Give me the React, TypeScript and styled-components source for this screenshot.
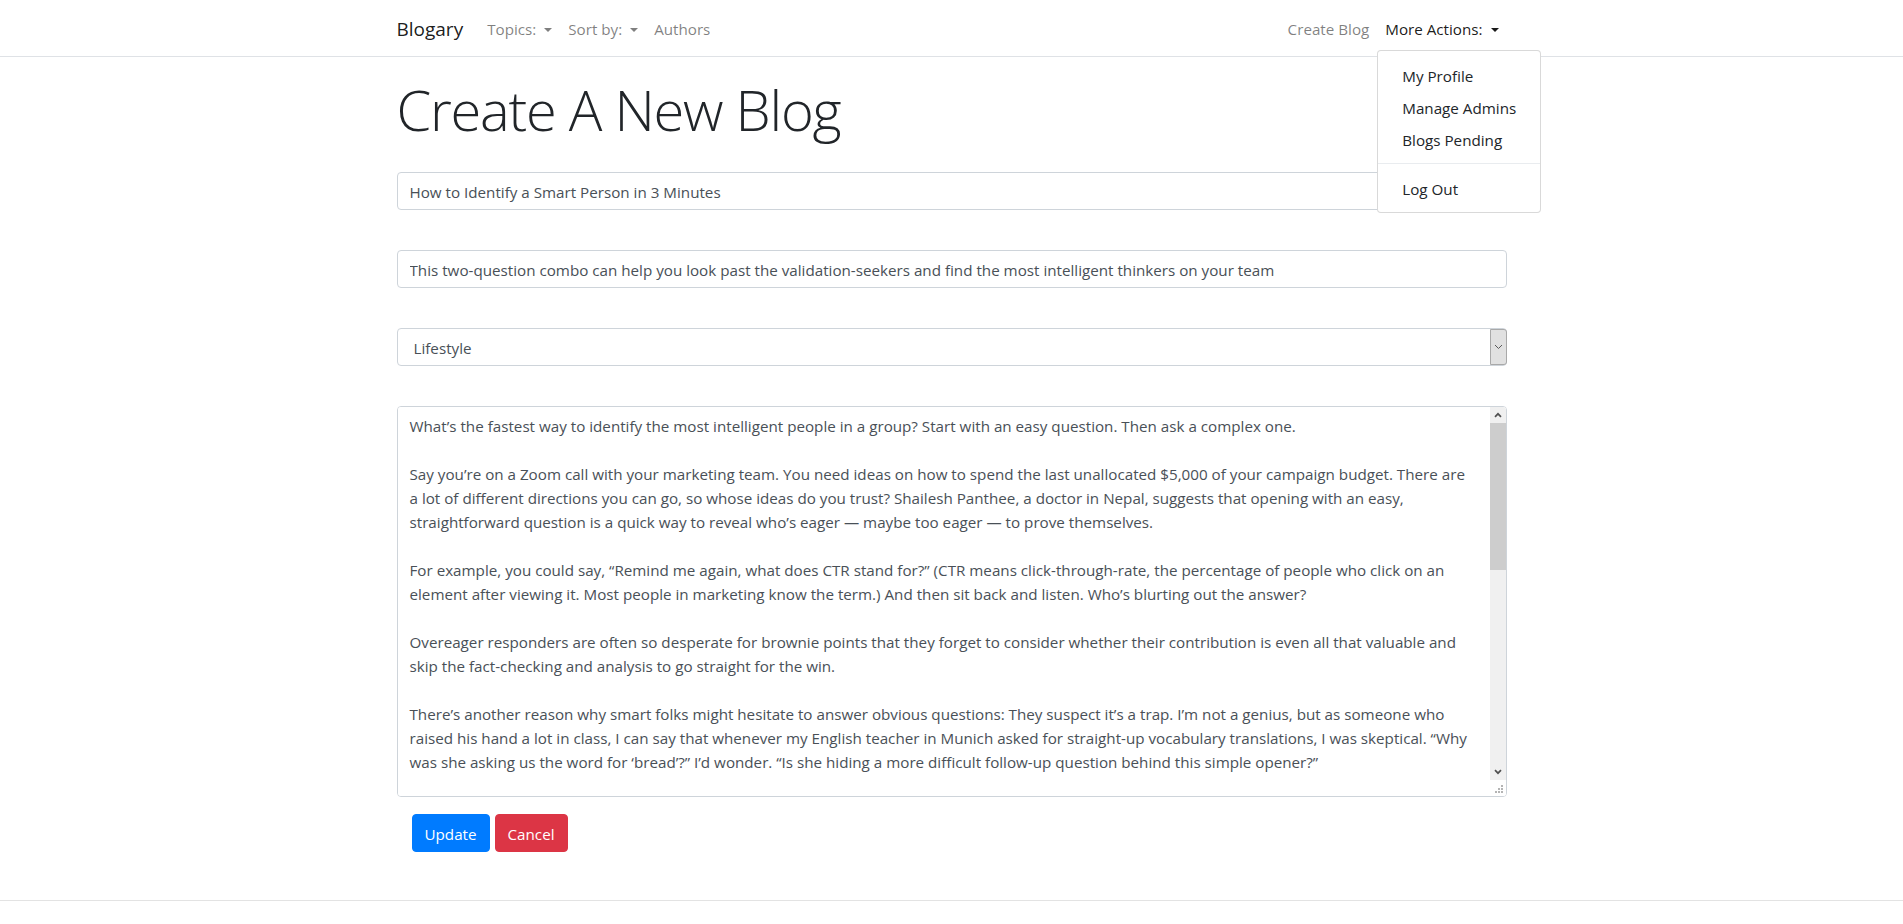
import React, { useLayoutEffect, useRef, useState } from "react";
import styled, { createGlobalStyle } from "styled-components";

const GlobalStyle = createGlobalStyle`
  html, body { margin: 0; padding: 0; background: #fff; }
  body {
    font-family: "Open Sans", "Liberation Sans", Arial, sans-serif;
    font-size: 15.2px;
    line-height: 24px;
    color: #212529;
  }
  *, *::before, *::after { box-sizing: border-box; }
`;

const Navbar = styled.nav`
  border-bottom: 1px solid #dfe2e6;
  padding: 8px 0;
`;

const NavContainer = styled.div`
  max-width: 1140px;
  margin: 0 auto;
  padding: 0 15px;
  display: flex;
  align-items: center;
  justify-content: space-between;
`;

const LeftGroup = styled.div`
  display: flex;
  align-items: center;
`;

const Brand = styled.a`
  font-size: 19px;
  line-height: 30px;
  padding: 6px 0 4px;
  margin-right: 16px;
  color: rgba(0, 0, 0, 0.9);
  text-decoration: none;
`;

const NavList = styled.ul`
  display: flex;
  list-style: none;
  margin: 0;
  padding: 0;
`;

const NavItem = styled.li`
  position: relative;
`;

const NavLink = styled.a<{ $active?: boolean }>`
  display: block;
  padding: 9px 8px 7px;
  line-height: 24px;
  font-size: 15.2px;
  white-space: pre;
  color: ${(p) => (p.$active ? "rgba(0, 0, 0, 0.9)" : "rgba(0, 0, 0, 0.5)")};
  text-decoration: none;
  cursor: pointer;
`;

const Caret = styled.span`
  display: inline-block;
  margin-left: 4px;
  vertical-align: 3px;
  border-top: 4.8px solid currentColor;
  border-left: 4.2px solid transparent;
  border-right: 4.2px solid transparent;
`;

const DropdownMenu = styled.div`
  position: absolute;
  top: calc(100% + 2px);
  left: 0;
  z-index: 1000;
  min-width: 163px;
  padding: 8px 0;
  background: #fff;
  border: 1px solid rgba(0, 0, 0, 0.15);
  border-radius: 4px;
`;

const DropdownItem = styled.a`
  display: block;
  padding: 5px 24px 3px;
  line-height: 24px;
  font-size: 15.2px;
  color: #212529;
  white-space: nowrap;
  text-decoration: none;
`;

const DropdownDivider = styled.div`
  height: 0;
  margin: 8px 0;
  border-top: 1px solid #e9ecef;
`;

const Container = styled.main`
  max-width: 1140px;
  margin: 0 auto;
  padding: 0 15px;
`;

const PageTitle = styled.h1`
  margin: 19px 0 0;
  font-size: 56px;
  font-weight: 300;
  line-height: 67px;
  letter-spacing: -1.25px;
  color: #212529;
`;

const Form = styled.form`
  margin-top: 29px;
  display: flex;
  flex-direction: column;
  gap: 40px;
`;

const fieldBase = `
  display: block;
  width: 100%;
  margin: 0;
  font-family: "Open Sans", "Liberation Sans", Arial, sans-serif;
  font-size: 15.2px;
  line-height: 24px;
  color: #495057;
  background: #fff;
  border: 1px solid #ced4da;
  border-radius: 4px;
  outline: none;
`;

const TextInput = styled.input`
  ${fieldBase}
  height: 38px;
  padding: 7px 12px 5px;
`;

const SelectWrap = styled.div`
  position: relative;
`;

const Select = styled.select`
  ${fieldBase}
  height: 38px;
  padding: 7px 16px 5px;
  appearance: none;
  -webkit-appearance: none;
`;

const SelectButton = styled.span`
  position: absolute;
  top: 1px;
  bottom: 1px;
  right: 0;
  width: 17px;
  display: flex;
  align-items: center;
  justify-content: center;
  background: #e1e1e1;
  border: 1px solid #a9a9a9;
  border-radius: 0 3px 3px 0;
  pointer-events: none;
`;

const EditorWrap = styled.div`
  position: relative;
`;

const TextArea = styled.textarea`
  ${fieldBase}
  height: 391px;
  padding: 7px 28px 5px 12px;
  white-space: pre;
  overflow-x: hidden;
  overflow-y: scroll;
  resize: none;
  scrollbar-width: none;
`;

const ScrollRail = styled.div`
  position: absolute;
  top: 1px;
  right: 1px;
  bottom: 1px;
  width: 16px;
  display: flex;
  flex-direction: column;
  pointer-events: none;
  border-radius: 0 3px 3px 0;
  overflow: hidden;
`;

const RailButton = styled.div`
  flex: 0 0 16px;
  display: flex;
  align-items: center;
  justify-content: center;
  background: #f0f0f0;
`;

const RailTrack = styled.div`
  position: relative;
  flex: 1 1 auto;
  background: #f0f0f0;
`;

const RailThumb = styled.div`
  position: absolute;
  left: 0;
  right: 0;
  background: #cdcdcd;
`;

const RailCorner = styled.div`
  flex: 0 0 16px;
  display: flex;
  align-items: flex-end;
  justify-content: flex-end;
  background: #fff;
`;

const ButtonRow = styled.div`
  margin-top: 17px;
  padding-left: 15px;
  display: flex;
  gap: 5px;
`;

const Button = styled.button<{ $variant: "primary" | "danger" }>`
  height: 38px;
  padding: 7px 12px 5px;
  font-family: "Open Sans", "Liberation Sans", Arial, sans-serif;
  font-size: 15.2px;
  line-height: 24px;
  color: #fff;
  border: 1px solid ${(p) => (p.$variant === "primary" ? "#007bff" : "#dc3545")};
  background: ${(p) => (p.$variant === "primary" ? "#007bff" : "#dc3545")};
  border-radius: 4px;
  cursor: pointer;
`;

const Footer = styled.footer`
  margin-top: 48px;
  height: 40px;
  border-top: 1px solid #e3e3e3;
`;

const bodyLines = [
  "What’s the fastest way to identify the most intelligent people in a group? Start with an easy question. Then ask a complex one.",
  "",
  "Say you’re on a Zoom call with your marketing team. You need ideas on how to spend the last unallocated $5,000 of your campaign budget. There are",
  "a lot of different directions you can go, so whose ideas do you trust? Shailesh Panthee, a doctor in Nepal, suggests that opening with an easy,",
  "straightforward question is a quick way to reveal who’s eager — maybe too eager — to prove themselves.",
  "",
  "For example, you could say, “Remind me again, what does CTR stand for?” (CTR means click-through-rate, the percentage of people who click on an",
  "element after viewing it. Most people in marketing know the term.) And then sit back and listen. Who’s blurting out the answer?",
  "",
  "Overeager responders are often so desperate for brownie points that they forget to consider whether their contribution is even all that valuable and",
  "skip the fact-checking and analysis to go straight for the win.",
  "",
  "There’s another reason why smart folks might hesitate to answer obvious questions: They suspect it’s a trap. I’m not a genius, but as someone who",
  "raised his hand a lot in class, I can say that whenever my English teacher in Munich asked for straight-up vocabulary translations, I was skeptical. “Why",
  "was she asking us the word for ‘bread’?” I’d wonder. “Is she hiding a more difficult follow-up question behind this simple opener?”",
  "",
  "Now comes the second half of the combo: ask a complex question, one that doesn’t have a clear-cut answer. Something like, “How would you",
  "reallocate our budget if our click-through-rate dropped by half next month?”",
  "",
  "Watch what happens. The people who were quickest to answer the easy question often go quiet, or they give a confident answer that falls apart",
  "under a few follow-up questions. Meanwhile, the people who held back the first time tend to speak up. They ask clarifying questions. They",
  "think out loud. They acknowledge what they don’t know.",
  "",
  "That’s a sign of real intelligence. Smart people are comfortable with complexity, and they know that the best answers rarely come instantly.",
  "They’re more interested in getting it right than in being first.",
  "",
  "Of course, this isn’t a perfect test. Some people are simply shy, and some are quick thinkers who happen to know the answer. But if you pay",
  "attention to how people respond to both questions, you’ll quickly get a sense of who’s trying to impress you and who’s trying to help you.",
  "",
  "So the next time you need to find the sharpest minds in the room, try the two-question combo. Start easy. Then go deep. And listen closely",
  "to who speaks up, and when.",
  "",
  "It only takes a few minutes, but it can tell you a lot about the people on your team — and help you build a culture where thoughtful",
  "answers are valued more than fast ones.",
  "",
  "Want more tips like this? Sign up for the free weekly newsletter and get the latest on leadership, communication, and",
  "emotional intelligence.",
];

const topics = ["Lifestyle", "Technology", "Business", "Health", "Travel", "Education"];

const RAIL_BUTTONS = 48;

function Chevron({ up }: { up?: boolean }) {
  return (
    <svg width="8" height="6" viewBox="0 0 8 6">
      <polyline
        points={up ? "1,4.8 4,1.8 7,4.8" : "1,1.2 4,4.2 7,1.2"}
        fill="none"
        stroke="#505050"
        strokeWidth="1.7"
      />
    </svg>
  );
}

function Grip() {
  const dots = [
    [11, 5],
    [8, 8],
    [11, 8],
    [5, 11],
    [8, 11],
    [11, 11],
  ];
  return (
    <svg width="16" height="16" viewBox="0 0 16 16">
      {dots.map(([x, y]) => (
        <rect key={`${x}-${y}`} x={x} y={y} width="2" height="2" fill="#b4b4b4" />
      ))}
    </svg>
  );
}

function BodyEditor() {
  const ref = useRef<HTMLTextAreaElement>(null);
  const [thumb, setThumb] = useState({ top: 0, height: 146 });

  const measure = () => {
    const el = ref.current;
    if (!el) return;
    const track = el.clientHeight - RAIL_BUTTONS;
    const ratio = Math.min(1, el.clientHeight / el.scrollHeight);
    const height = Math.max(20, track * ratio);
    const maxScroll = el.scrollHeight - el.clientHeight;
    const top = maxScroll > 0 ? ((track - height) * el.scrollTop) / maxScroll : 0;
    setThumb({ top, height });
  };

  useLayoutEffect(measure, []);

  return (
    <EditorWrap>
      <TextArea ref={ref} wrap="off" defaultValue={bodyLines.join("\n")} onScroll={measure} />
      <ScrollRail>
        <RailButton>
          <Chevron up />
        </RailButton>
        <RailTrack>
          <RailThumb style={{ top: thumb.top, height: thumb.height }} />
        </RailTrack>
        <RailButton>
          <Chevron />
        </RailButton>
        <RailCorner>
          <Grip />
        </RailCorner>
      </ScrollRail>
    </EditorWrap>
  );
}

export default function App() {
  return (
    <>
      <GlobalStyle />
      <Navbar>
        <NavContainer>
          <LeftGroup>
            <Brand href="#">Blogary</Brand>
            <NavList>
              <NavItem>
                <NavLink>
                  {"Topics: "}
                  <Caret />
                </NavLink>
              </NavItem>
              <NavItem>
                <NavLink>
                  {"Sort by: "}
                  <Caret />
                </NavLink>
              </NavItem>
              <NavItem>
                <NavLink>Authors</NavLink>
              </NavItem>
            </NavList>
          </LeftGroup>
          <NavList>
            <NavItem>
              <NavLink>Create Blog</NavLink>
            </NavItem>
            <NavItem>
              <NavLink $active>
                {"More Actions: "}
                <Caret />
              </NavLink>
              <DropdownMenu>
                <DropdownItem href="#">My Profile</DropdownItem>
                <DropdownItem href="#">Manage Admins</DropdownItem>
                <DropdownItem href="#">Blogs Pending</DropdownItem>
                <DropdownDivider />
                <DropdownItem href="#">Log Out</DropdownItem>
              </DropdownMenu>
            </NavItem>
          </NavList>
        </NavContainer>
      </Navbar>

      <Container>
        <PageTitle>Create A New Blog</PageTitle>
        <Form onSubmit={(e) => e.preventDefault()}>
          <TextInput type="text" defaultValue="How to Identify a Smart Person in 3 Minutes" />
          <TextInput
            type="text"
            defaultValue="This two-question combo can help you look past the validation-seekers and find the most intelligent thinkers on your team"
          />
          <SelectWrap>
            <Select defaultValue="Lifestyle">
              {topics.map((t) => (
                <option key={t} value={t}>
                  {t}
                </option>
              ))}
            </Select>
            <SelectButton>
              <svg width="9" height="6" viewBox="0 0 9 6">
                <polyline points="1,1 4.5,4.5 8,1" fill="none" stroke="#5a5a5a" strokeWidth="1" />
              </svg>
            </SelectButton>
          </SelectWrap>
          <BodyEditor />
        </Form>
        <ButtonRow>
          <Button $variant="primary">Update</Button>
          <Button $variant="danger">Cancel</Button>
        </ButtonRow>
      </Container>
      <Footer />
    </>
  );
}
